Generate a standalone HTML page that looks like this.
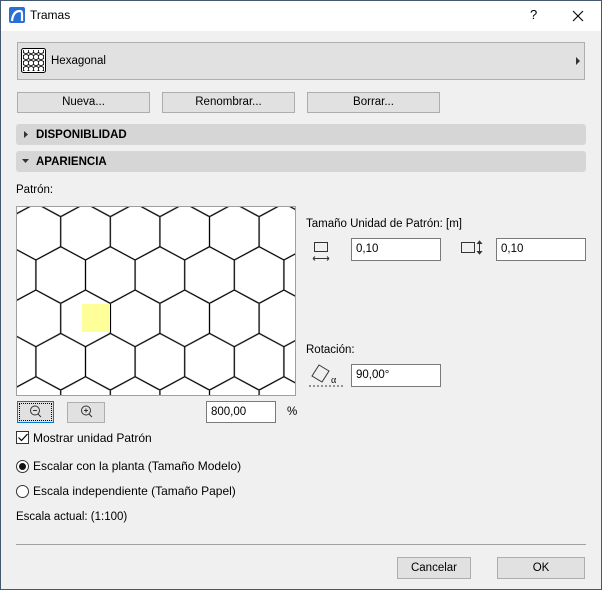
<!DOCTYPE html>
<html><head><meta charset="utf-8"><style>
*{box-sizing:border-box;margin:0;padding:0}
body{width:602px;height:590px;overflow:hidden;background:#f0f0f0;font-family:"Liberation Sans",Arial,sans-serif;font-size:11.5px;color:#000;position:relative}
.a{position:absolute}
.win{position:absolute;left:0;top:0;width:602px;height:590px;border:1px solid #44596e;}
.btn{position:absolute;background:#e1e1e1;border:1px solid #adadad;text-align:center;line-height:19px}
.bar{position:absolute;left:16px;width:570px;height:21px;background:#d6d6d6;border-radius:3px;font-weight:bold;line-height:21px;padding-left:20px}
.inp{position:absolute;background:#fff;border:1px solid #7a7a7a;line-height:20px;padding-left:4px}
</style></head><body>
<div class="win"></div>
<div class="a" style="left:1px;top:1px;width:600px;height:30px;background:#fff"></div>
<svg class="a" style="left:9px;top:7px" width="16" height="16"><rect width="16" height="16" rx="2" fill="#2a6fd6"/><path d="M3 14 Q4 4 11 4 Q13 4 13 7 L13 14" stroke="#fff" stroke-width="2.2" fill="none"/></svg>
<div class="a" style="left:30px;top:8px;font-size:12px">Tramas</div>
<div class="a" style="left:530px;top:7px;font-size:13px">?</div>
<svg class="a" style="left:572px;top:10px" width="12" height="12"><path d="M1 1L11 11M11 1L1 11" stroke="#000" stroke-width="1.1"/></svg>

<div class="a" style="left:17px;top:42px;width:568px;height:38px;background:#e1e1e1;border:1px solid #adadad"></div>
<svg class="a" style="left:21px;top:48px" width="25" height="25"><defs><pattern id="s" width="5" height="6" patternUnits="userSpaceOnUse"><path d="M0 0L2.5 1.5 5 0M2.5 1.5V4.5L0 6M2.5 4.5L5 6" stroke="#000" stroke-width=".8" fill="none"/></pattern></defs><rect x=".5" y=".5" width="24" height="24" rx="2" fill="#fff" stroke="#000"/><rect x="2" y="2" width="21" height="21" fill="url(#s)"/></svg>
<div class="a" style="left:51px;top:55px">Hexagonal</div>
<svg class="a" style="left:576px;top:57px" width="5" height="8"><path d="M0 0L4 4 0 8Z" fill="#333"/></svg>

<div class="btn" style="left:17px;top:92px;width:133px;height:21px">Nueva...</div>
<div class="btn" style="left:162px;top:92px;width:133px;height:21px">Renombrar...</div>
<div class="btn" style="left:307px;top:92px;width:133px;height:21px">Borrar...</div>

<div class="bar" style="top:124px;line-height:22px">DISPONIBLIDAD</div>
<svg class="a" style="left:24px;top:131px" width="4" height="7"><path d="M0 0L4 3.5 0 7Z" fill="#333"/></svg>
<div class="bar" style="top:151px;line-height:22px">APARIENCIA</div>
<svg class="a" style="left:22px;top:159px" width="7" height="4"><path d="M0 0H7L3.5 4Z" fill="#333"/></svg>

<div class="a" style="left:16px;top:184px">Patrón:</div>
<svg class="a" style="left:16px;top:206px" width="280" height="190">
<defs><pattern id="h" x="19.9" y="10.7" width="49.6" height="86.7" patternUnits="userSpaceOnUse"><path d="M24.8 0V30L0 43.3V73.3L24.8 86.7M24.8 30L49.6 43.3V73.3L24.8 86.7" stroke="#000" stroke-width="1.3" fill="none"/></pattern></defs>
<rect width="280" height="190" fill="#fff"/>
<rect width="280" height="190" fill="url(#h)"/>
<rect x="66" y="98" width="28" height="28" fill="#ffff99"/>
<path d="M94.5 98V126" stroke="#000"/>
<rect x=".5" y=".5" width="279" height="189" fill="none" stroke="#a0a0a0"/>
</svg>

<div class="a" style="left:17px;top:401px;width:37px;height:22px;border:1px solid #0078d7;background:#e1e1e1"><div style="position:absolute;left:1px;top:1px;right:1px;bottom:1px;border:1px dotted #000"></div></div>
<svg class="a" style="left:29px;top:405px" width="13" height="13"><circle cx="6" cy="5.5" r="4.5" fill="none" stroke="#333"/><path d="M4 5.5H8M9 9L12 12" stroke="#333"/></svg>
<div class="a" style="left:67px;top:402px;width:38px;height:21px;border:1px solid #adadad;background:#e1e1e1"></div>
<svg class="a" style="left:80px;top:405px" width="13" height="13"><circle cx="6" cy="5.5" r="4.5" fill="none" stroke="#333"/><path d="M4 5.5H8M6 3.5V7.5M9 9L12 12" stroke="#333"/></svg>
<div class="inp" style="left:206px;top:401px;width:70px;height:22px">800,00</div>
<div class="a" style="left:287px;top:406px">%</div>

<div class="a" style="left:16px;top:431px;width:13px;height:13px;border:1px solid #333;background:#fff"></div>
<svg class="a" style="left:18px;top:433px" width="10" height="9"><path d="M.5 4.5L3.5 7.5 9.5 1" stroke="#000" stroke-width="1.2" fill="none"/></svg>
<div class="a" style="left:33px;top:431px;font-size:12px">Mostrar unidad Patrón</div>

<div class="a" style="left:16px;top:460px;width:13px;height:13px;border:1px solid #333;border-radius:50%;background:#fff"><div style="position:absolute;left:2px;top:2px;width:7px;height:7px;border-radius:50%;background:#111"></div></div>
<div class="a" style="left:33px;top:459px;font-size:12px">Escalar con la planta (Tamaño Modelo)</div>
<div class="a" style="left:16px;top:485px;width:13px;height:13px;border:1px solid #333;border-radius:50%;background:#fff"></div>
<div class="a" style="left:33px;top:484px;font-size:12px">Escala independiente (Tamaño Papel)</div>
<div class="a" style="left:16px;top:511px">Escala actual: (1:100)</div>

<div class="a" style="left:306px;top:218px">Tamaño Unidad de Patrón: [m]</div>
<svg class="a" style="left:312px;top:240px" width="18" height="22"><rect x="2.5" y="2.5" width="13" height="9" fill="none" stroke="#333"/><path d="M1 18.5H17M1 18.5L3 16.5M1 18.5L3 20.5M17 18.5L15 16.5M17 18.5L15 20.5" stroke="#333" fill="none"/></svg>
<div class="inp" style="left:351px;top:238px;width:90px;height:23px">0,10</div>
<svg class="a" style="left:460px;top:240px" width="24" height="16"><rect x="1.5" y="2.5" width="13" height="10" fill="none" stroke="#333"/><path d="M19.5 1V14M19.5 1L17.5 3.5H21.5ZM19.5 14L17.5 11.5H21.5Z" stroke="#333" fill="#333"/></svg>
<div class="inp" style="left:496px;top:238px;width:90px;height:23px">0,10</div>

<div class="a" style="left:306px;top:344px">Rotación:</div>
<svg class="a" style="left:307px;top:362px" width="36" height="26"><path d="M5 14L12 3 22 9 15 20Z" fill="none" stroke="#333"/><path d="M2 24H36" stroke="#333" stroke-dasharray="2 2"/><text x="24" y="21" font-size="10" font-family="Liberation Serif">α</text></svg>
<div class="inp" style="left:351px;top:364px;width:90px;height:23px">90,00°</div>

<div class="a" style="left:16px;top:544px;width:570px;height:1px;background:#a0a0a0"></div>
<div class="btn" style="left:397px;top:557px;width:74px;height:22px;line-height:20px">Cancelar</div>
<div class="btn" style="left:497px;top:557px;width:88px;height:22px;line-height:20px">OK</div>
</body></html>
